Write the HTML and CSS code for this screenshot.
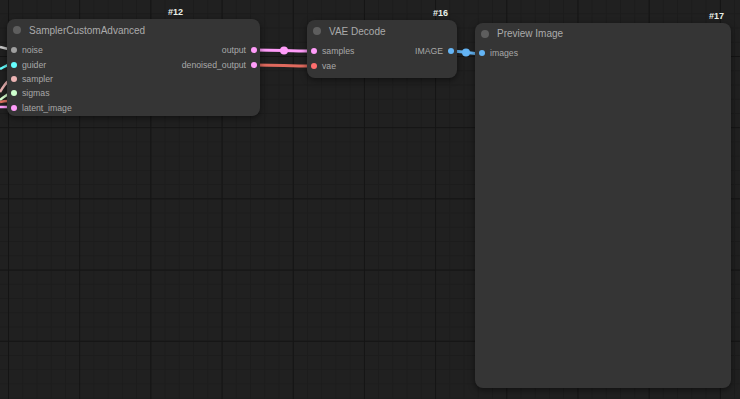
FILE: index.html
```html
<!DOCTYPE html>
<html lang="en">
<head>
  <meta charset="UTF-8">
  <title>Workflow | Canvas</title>
  <link rel="stylesheet" href="styles.css">
</head>
<body>

  <div class="canvas">
    <!-- links between nodes -->
    <svg class="links" width="740" height="399" viewBox="0 0 740 399">
      <path d="M0 47 L12 50" stroke="#c8c8c8" stroke-width="2.5" fill="none"/>
      <path d="M0 69 C4 67 6 65 12 64" stroke="#66ffff" stroke-width="2.5" fill="none"/>
      <path d="M0 92 C4 86 6 81 12 79" stroke="#e8b0b0" stroke-width="2.5" fill="none"/>
      <path d="M0 100 C4 97 6 94 12 93" stroke="#d8ffd0" stroke-width="2.5" fill="none"/>
      <path d="M0 102 C4 101 6 101 8 101" stroke="#e07060" stroke-width="2.5" fill="none"/>
      <path d="M0 107 L12 107" stroke="#ff9cf9" stroke-width="2.5" fill="none"/>

      <path d="M254 50 C284 50 284 51 314 51" stroke="#ff9cf9" stroke-width="3" fill="none"/>
      <circle cx="284" cy="50.5" r="4" fill="#ff9cf9"/>
      <path d="M254 65 C284 65 284 66 314 66" stroke="#e06a5e" stroke-width="3" fill="none"/>
      <path d="M450 51 C466 51 468 54 483 54" stroke="#64b5f6" stroke-width="3" fill="none"/>
      <circle cx="466" cy="52.5" r="4" fill="#64b5f6"/>
    </svg>

    <div class="node node-sampler">
      <span class="badge">#12</span>
      <div class="node-title"><span class="title-dot"></span>SamplerCustomAdvanced</div>
      <div class="node-body">
        <div class="slots inputs">
          <div class="slot"><span class="dot noise"></span>noise</div>
          <div class="slot"><span class="dot guider"></span>guider</div>
          <div class="slot"><span class="dot sampler"></span>sampler</div>
          <div class="slot"><span class="dot sigmas"></span>sigmas</div>
          <div class="slot"><span class="dot latent"></span>latent_image</div>
        </div>
        <div class="slots outputs">
          <div class="slot">output<span class="dot latent"></span></div>
          <div class="slot">denoised_output<span class="dot latent"></span></div>
        </div>
      </div>
    </div>

    <div class="node node-vae">
      <span class="badge">#16</span>
      <div class="node-title"><span class="title-dot"></span>VAE Decode</div>
      <div class="node-body">
        <div class="slots inputs">
          <div class="slot"><span class="dot latent"></span>samples</div>
          <div class="slot"><span class="dot vae"></span>vae</div>
        </div>
        <div class="slots outputs">
          <div class="slot">IMAGE<span class="dot image"></span></div>
        </div>
      </div>
    </div>

    <div class="node node-preview">
      <span class="badge">#17</span>
      <div class="node-title"><span class="title-dot"></span>Preview Image</div>
      <div class="node-body">
        <div class="slots inputs">
          <div class="slot"><span class="dot image"></span>images</div>
        </div>
      </div>
    </div>
  </div>

</body>
</html>
```

FILE: styles.css
```css
body {
  margin: 0;
  background-color: #202020;
  font-family: 'Liberation Sans', Arial, sans-serif;
  overflow: hidden;
}

.canvas {
  position: relative;
  width: 740px;
  height: 399px;
  background-color: #202020;
  background-image:
    linear-gradient(90deg, #141414 1px, transparent 1px),
    linear-gradient(#141414 1px, transparent 1px),
    linear-gradient(90deg, #1c1c1c 1px, transparent 1px),
    linear-gradient(#1c1c1c 1px, transparent 1px);
  background-size: 71.2px 71.2px, 71.2px 71.2px, 14.24px 14.24px, 14.24px 14.24px;
  background-position: 8px 56px, 8px 56px, 8px 56px, 8px 56px;
  overflow: hidden;
}

.links {
  position: absolute;
  left: 0;
  top: 0;
}

.node {
  position: absolute;
  background-color: #353535;
  border-radius: 8px;
  box-shadow: 0 2px 6px rgba(0, 0, 0, 0.5);
  color: #aaa;
}

.node-sampler {
  left: 7px;
  top: 19px;
  width: 253px;
  height: 97px;
}

.node-vae {
  left: 307px;
  top: 20px;
  width: 150px;
  height: 58px;
}

.node-preview {
  left: 475px;
  top: 23px;
  width: 256px;
  height: 365px;
}

.badge {
  position: absolute;
  top: -12px;
  font-size: 9px;
  font-weight: bold;
  color: #e8f0e8;
}

.node-sampler .badge { left: 161px; }
.node-vae .badge { right: 9px; }
.node-preview .badge { right: 7px; }

.node-title {
  display: flex;
  align-items: center;
  height: 22px;
  padding-left: 6px;
  font-size: 10px;
  color: #ababab;
}

.node-preview .node-title {
  height: 21px;
}

.title-dot {
  width: 8px;
  height: 8px;
  border-radius: 50%;
  background-color: #5e5e5e;
  margin-right: 8px;
}

.node-body {
  display: flex;
  justify-content: space-between;
  padding-top: 2px;
}

.slots {
  display: flex;
  flex-direction: column;
}

.slot {
  display: flex;
  align-items: center;
  height: 14.4px;
  font-size: 8.7px;
  color: #a8a8a8;
}

.inputs .slot .dot {
  margin-left: 4px;
  margin-right: 5px;
}

.outputs .slot {
  justify-content: flex-end;
}

.outputs .slot .dot {
  margin-left: 5px;
  margin-right: 3px;
}

.dot {
  width: 6px;
  height: 6px;
  border-radius: 50%;
  display: inline-block;
}

.noise { background-color: #a0a0a0; }
.guider { background-color: #66ffff; }
.sampler { background-color: #ecb4b4; }
.sigmas { background-color: #cdffcd; }
.latent { background-color: #ff9cf9; }
.vae { background-color: #ff6e6e; }
.image { background-color: #64b5f6; }
```
